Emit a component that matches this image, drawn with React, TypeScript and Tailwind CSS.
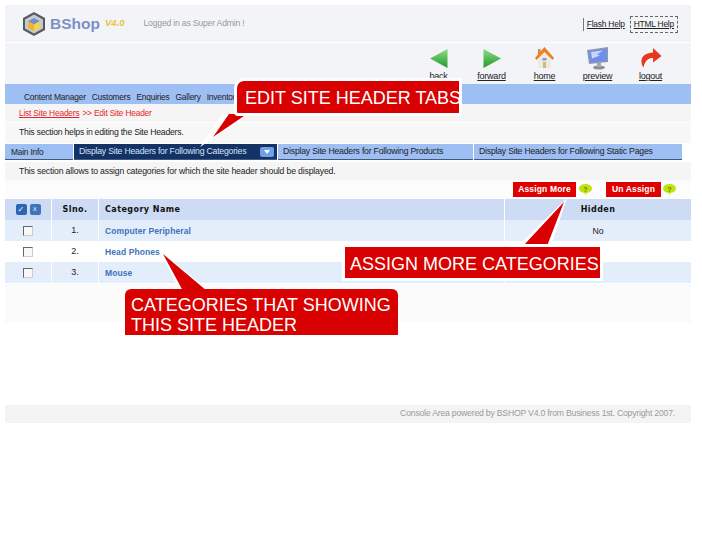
import React from "react";

const navItems = ["Content Manager", "Customers", "Enquiries", "Gallery", "Inventory"];

const rows = [
  { no: "1.", name: "Computer Peripheral", hidden: "No", tint: true },
  { no: "2.", name: "Head Phones", hidden: "", tint: false },
  { no: "3.", name: "Mouse", hidden: "", tint: true },
];

function Logo() {
  return (
    <svg width="24" height="26" viewBox="0 0 24 26">
      <path d="M12 1 23 7v12l-11 6L1 19V7z" fill="#555a60" />
      <path d="M12 3.5 21 8.5v9l-9 5-9-5v-9z" fill="#c9cacb" />
      <path d="M12 7l6 3.2-6 3.3-6-3.3z" fill="#6f8fd0" />
      <path d="M6 10.2l6 3.3V20l-6-3.3z" fill="#efb52f" />
      <path d="M18 10.2l-6 3.3V20l6-3.3z" fill="#f7d34a" />
    </svg>
  );
}

function BackIcon() {
  return (
    <svg width="18" height="19" viewBox="0 0 18 19">
      <defs>
        <linearGradient id="backFill" x1="0" y1="0" x2="0" y2="1">
          <stop offset="0" stopColor="#8fdc84" />
          <stop offset="1" stopColor="#1f9a2e" />
        </linearGradient>
      </defs>
      <path d="M17.5 0v19L0 9.5z" fill="url(#backFill)" />
    </svg>
  );
}

function ForwardIcon() {
  return (
    <svg width="18" height="19" viewBox="0 0 18 19">
      <defs>
        <linearGradient id="forwardFill" x1="0" y1="0" x2="0" y2="1">
          <stop offset="0" stopColor="#8fdc84" />
          <stop offset="1" stopColor="#1f9a2e" />
        </linearGradient>
      </defs>
      <path d="M0.5 0v19L18 9.5z" fill="url(#forwardFill)" />
    </svg>
  );
}

function HomeIcon() {
  return (
    <svg width="19" height="22" viewBox="0 0 19 22">
      <path d="M3.5 10 9.5 5l6 5v11h-12z" fill="#efeadb" />
      <path d="M8 15h3v6H8z" fill="#c9b98a" />
      <path d="M7.5 11h4v2.5h-4z" fill="#7d9bd6" />
      <path d="M9.5 0 19 11l-1.5 2-8-8-8 8L0 11 3 7.5V2h2.5v2.5z" fill="#e9812c" />
    </svg>
  );
}

function PreviewIcon() {
  return (
    <svg width="22" height="23" viewBox="0 0 22 23">
      <path d="M0 3 21 0v15L2 17z" fill="#8b97b8" />
      <path d="M2 4.5 19.5 2v11.5L3.5 15z" fill="#6d8fea" />
      <path d="M4 5l12-1.5-6 4 3 1-8 3z" fill="#c8d6fa" />
      <ellipse cx="12" cy="20.5" rx="6" ry="2" fill="#8d8f95" />
      <path d="M10 16h4v4h-4z" fill="#a6a8ad" />
    </svg>
  );
}

function LogoutIcon() {
  return (
    <svg width="22" height="20" viewBox="0 0 22 20">
      <path d="M13 0l8.5 8L13 14.5V10C8 10 5 12.500 3.500 19.500 0 14 0 5.500 13 4.500z" fill="#e8361f" />
    </svg>
  );
}

function HelpBubble() {
  return (
    <svg width="13" height="12" viewBox="0 0 13 12" className="shrink-0">
      <ellipse cx="6.500" cy="4.500" rx="6.500" ry="4.500" fill="#bfe30c" />
      <path d="M5 8h3l-1.500 3z" fill="#bfe30c" />
      <text x="6.500" y="7.500" fontSize="7" textAnchor="middle" fill="#6b7d08" fontFamily="Liberation Sans, sans-serif" fontWeight="700">?</text>
    </svg>
  );
}

function ToolbarItem({ icon, label }: { icon: React.ReactNode; label: string }) {
  return (
    <div className="flex w-[53px] flex-col items-center">
      <div className="flex h-[24px] items-center">{icon}</div>
      <span className="mt-[1px] text-[9px] leading-[10px] text-[#222] underline">{label}</span>
    </div>
  );
}

function Checkbox() {
  return <span className="inline-block h-[10px] w-[10px] border border-[#666] border-r-[#ccc] border-b-[#ccc] bg-[#f8f8f8]" />;
}

function Callout({ className, children }: { className: string; children: React.ReactNode }) {
  return (
    <div className={`absolute whitespace-nowrap border-[3px] border-white bg-[#d80000] font-['Liberation_Sans',Arial,sans-serif] text-[18px] leading-[20px] tracking-normal text-white ${className}`}>
      {children}
    </div>
  );
}

export default function App() {
  return (
    <div className="relative h-[535px] w-[702px] overflow-hidden bg-white font-['Liberation_Sans',Arial,sans-serif] text-[8.700px] tracking-[-0.22px] text-[#222]">
      <div className="ml-[5px] w-[686px] pt-[5px]">
        <header className="flex h-[37px] items-center justify-between bg-[#f2f4f8] pl-[17px] pr-[13px]">
          <div className="flex items-center">
            <Logo />
            <span className="ml-[4px] text-[15.500px] font-bold tracking-normal text-[#7d8fc4]">BShop</span>
            <span className="ml-[5px] text-[9.500px] font-bold italic tracking-normal text-[#efc13c]">V4.0</span>
            <span className="ml-[19px] text-[#999]">Logged in as Super Admin !</span>
          </div>
          <div className="mt-[2px] flex items-center text-[8.400px] tracking-[-0.2px] text-[#222]">
            <span className="border-l border-[#777] pl-[3px] underline">Flash Help</span>
            <span className="ml-[5px] border border-dashed border-[#666] px-[3px] py-[1px] underline">HTML Help</span>
          </div>
        </header>

        <div className="mt-px flex h-[41px] justify-end bg-[#f2f4f8] pr-[14px] pt-[3px]">
          <ToolbarItem icon={<BackIcon />} label="back" />
          <ToolbarItem icon={<ForwardIcon />} label="forward" />
          <ToolbarItem icon={<HomeIcon />} label="home" />
          <ToolbarItem icon={<PreviewIcon />} label="preview" />
          <ToolbarItem icon={<LogoutIcon />} label="logout" />
        </div>

        <nav className="flex h-[20px] items-end gap-[6px] bg-[#9dbff4] pl-[19px] text-[8.400px] tracking-[-0.2px] text-[#222]">
          {navItems.map((item) => (
            <span key={item}>{item}</span>
          ))}
        </nav>

        <div className="flex h-[18px] items-center bg-[#f5f5f5] pl-[14px] pt-px text-[8.400px] tracking-[-0.2px] text-[#e8262a]">
          <span className="underline">List Site Headers</span>
          <span className="ml-[3px]">&gt;&gt; Edit Site Header</span>
        </div>

        <div className="mt-px flex h-[20px] items-center bg-[#f7f7f7] pl-[14px] tracking-[-0.25px]">
          This section helps in editing the Site Headers.
        </div>

        <div className="mt-px flex h-[16px] w-[677px] gap-px">
          <div className="flex w-[68px] items-center border-b border-[#44587a] bg-[#9dbff4] pl-[6px] pt-px text-[8.400px]">Main Info</div>
          <div className="flex w-[203px] items-center justify-between border-b border-[#44587a] bg-[#133366] pl-[5px] pr-[3px] pt-px text-[#d5e2f6]">
            Display Site Headers for Following Categories
            <span className="flex h-[10px] w-[14px] items-center justify-center rounded-[2px] bg-[#6f9fe8]">
              <span className="h-0 w-0 border-x-[3px] border-t-[4px] border-x-transparent border-t-white" />
            </span>
          </div>
          <div className="flex w-[195px] items-center border-b border-[#44587a] bg-[#9dbff4] pl-[5px] pt-px">Display Site Headers for Following Products</div>
          <div className="flex w-[208px] items-center border-b border-[#44587a] bg-[#9dbff4] pl-[5px] pt-px">Display Site Headers for Following Static Pages</div>
        </div>

        <div className="mt-[2px] flex h-[18px] items-center bg-[#f5f5f5] pl-[14px] pt-px tracking-[-0.17px]">
          This section allows to assign categories for which the site header should be displayed.
        </div>

        <div className="flex h-[19px] items-center justify-end bg-[#fcfcfc] pr-[15px] text-[8.500px] font-bold tracking-[0.15px] text-white">
          <span className="flex h-[15px] w-[63px] items-center justify-center bg-[#e00000]">Assign More</span>
          <span className="ml-[3px]"><HelpBubble /></span>
          <span className="ml-[14px] flex h-[15px] w-[55px] items-center justify-center bg-[#e00000]">Un Assign</span>
          <span className="ml-[2px]"><HelpBubble /></span>
        </div>

        <div className="grid grid-cols-[46px_46px_405px_186px] gap-x-px font-['DejaVu_Sans',sans-serif] text-[8px] font-bold tracking-[0.45px]">
          <div className="flex h-[21px] items-center justify-center gap-[3px] bg-[#cddcf4]">
            <span className="flex h-[11px] w-[11px] items-center justify-center rounded-[2px] bg-[#2a66b8] text-[8px] leading-none text-white">✓</span>
            <span className="flex h-[11px] w-[11px] items-center justify-center rounded-[2px] bg-[#3f74bd] text-[7px] font-normal leading-none text-[#dce8fa]">x</span>
          </div>
          <div className="flex h-[21px] items-center justify-center bg-[#cddcf4] pt-px text-[#111]">Slno.</div>
          <div className="flex h-[21px] items-center bg-[#cddcf4] pl-[6px] pt-px text-[#111]">Category Name</div>
          <div className="flex h-[21px] items-center justify-center bg-[#cddcf4] pt-px text-[#111]">Hidden</div>
          {rows.map((row) => {
            const bg = row.tint ? "bg-[#e4edfa]" : "bg-white";
            return (
              <React.Fragment key={row.no}>
                <div className={`flex h-[21px] items-center justify-center ${bg}`}>
                  <Checkbox />
                </div>
                <div className={`flex h-[21px] items-center justify-center pt-px font-['Liberation_Sans',sans-serif] text-[9px] font-normal tracking-normal ${bg}`}>{row.no}</div>
                <div className={`flex h-[21px] items-center pl-[6px] pt-[2px] font-['Liberation_Sans',sans-serif] text-[8.500px] tracking-[0.1px] text-[#3f72bd] ${bg}`}>{row.name}</div>
                <div className={`flex h-[21px] items-center justify-center pt-[2px] font-['Liberation_Sans',sans-serif] text-[8.700px] font-normal tracking-normal ${bg}`}>{row.hidden}</div>
              </React.Fragment>
            );
          })}
        </div>

        <div className="mt-px h-[39px] bg-[#fbfbfb]" />

        <footer className="mt-[82px] flex h-[18px] items-center justify-end bg-[#f4f4f4] pr-[16px] text-[#9a9a9a]">
          Console Area powered by BSHOP V4.0 from Business 1st. Copyright 2007.
        </footer>
      </div>

      {/* annotation pointers */}
      <svg className="absolute left-0 top-0" width="702" height="535" viewBox="0 0 702 535">
        <path d="M200 147 L222 114 L250 114 Z" fill="white" />
        <path d="M213 137 L229 114 L247 114 Z" fill="#d80000" />
        <path d="M160 251 L180 291 L210 291 Z" fill="white" />
        <path d="M163 254 L183 291 L207 291 Z" fill="#d80000" />
        <path d="M567 198 L518 246 L551 246 Z" fill="white" />
        <path d="M564 202 L523 246 L547 246 Z" fill="#d80000" />
      </svg>

      <Callout className="left-[234px] top-[78px] h-[38px] w-[228px] rounded-tl-[10px] rounded-bl-[4px] pl-[8px] pt-[7px]">
        EDIT SITE HEADER TABS
      </Callout>
      <Callout className="left-[342px] top-[244px] h-[37px] w-[261px] pl-[5px] pt-[7px]">
        ASSIGN MORE CATEGORIES
      </Callout>
      <div className="absolute left-[125px] top-[289px] h-[46px] w-[273px] whitespace-nowrap rounded-t-[6px] bg-[#d80000] pl-[6px] pt-[6px] font-['Liberation_Sans',Arial,sans-serif] text-[18px] leading-[20px] tracking-normal text-white">
        CATEGORIES THAT SHOWING
        <br />
        THIS SITE HEADER
      </div>
    </div>
  );
}
